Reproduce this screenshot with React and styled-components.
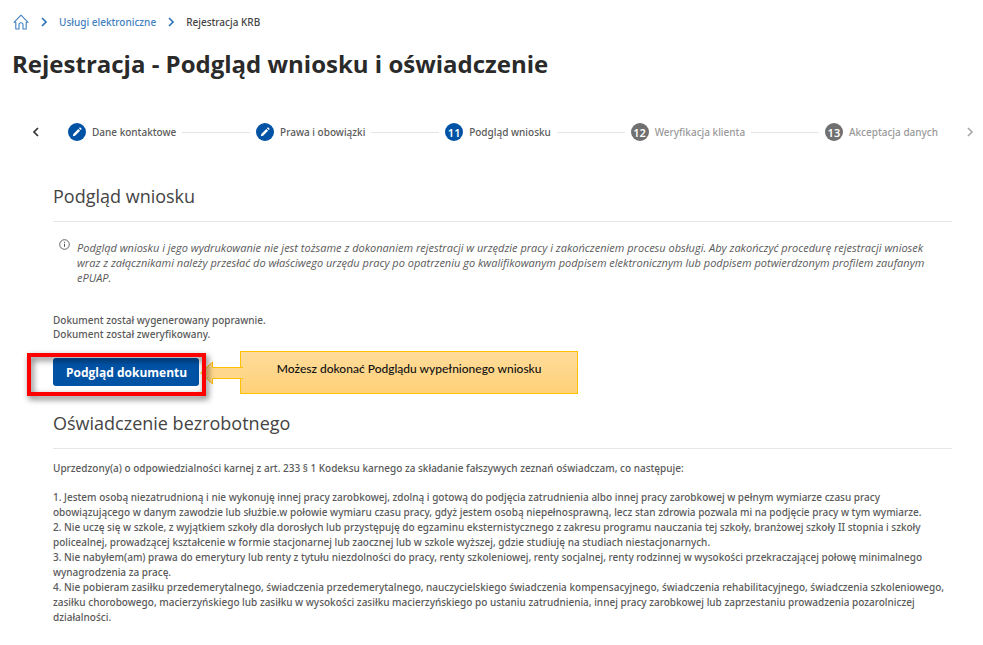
import React from 'react';
import styled, { createGlobalStyle } from 'styled-components';

const GlobalStyle = createGlobalStyle`
    * {
        box-sizing: border-box;
    }

    body {
        margin: 0;
        background-color: #fff;
        font-family: 'Noto Sans', sans-serif;
        font-size: 10px;
        font-weight: 500;
        line-height: 15px;
        color: #5a5a5a;
    }

    h1, h2, p, ol {
        margin: 0;
        padding: 0;
    }
`;

const Page = styled.div`
    padding: 14px 0 20px;
`;

const Breadcrumbs = styled.nav`
    display: flex;
    align-items: center;
    gap: 10px;
    height: 16px;
    padding-left: 13px;
    color: #2f74b8;

    a {
        display: flex;
        color: #3f80c0;
        text-decoration: none;
    }

    span {
        color: #444;
    }

    svg {
        display: block;
    }
`;

const Title = styled.h1`
    margin-top: 18px !important;
    padding-left: 12px !important;
    font-family: 'Open Sans', sans-serif;
    font-size: 24px;
    font-weight: 700;
    line-height: 32px;
    color: #2a2a2a;
`;

const Stepper = styled.div`
    display: flex;
    align-items: center;
    margin-top: 43px;
    padding: 0 8px 0 31px;
`;

const ArrowButton = styled.button`
    display: flex;
    padding: 0;
    border: 0;
    background: none;
    color: ${props => (props.$muted ? '#aaa' : '#333')};
    cursor: pointer;
`;

const Steps = styled.ol`
    display: flex;
    flex: 1;
    align-items: center;
    margin: 0 27px !important;
    list-style: none;
`;

const Step = styled.li`
    display: flex;
    flex: ${props => (props.$last ? 'none' : '1 1 auto')};
    align-items: center;
    white-space: nowrap;
    color: ${props => (props.$muted ? '#999' : '#5a5a5a')};

    &:not(:last-child)::after {
        content: '';
        flex: 1;
        height: 1px;
        margin: 0 6px;
        background-color: #e4e4e4;
    }
`;

const Badge = styled.span`
    display: flex;
    align-items: center;
    justify-content: center;
    width: 18px;
    height: 18px;
    margin-right: 6px;
    border-radius: 50%;
    background-color: ${props => (props.$muted ? '#707070' : '#0052a5')};
    font-size: 11px;
    font-weight: 600;
    color: #fff;
`;

const Content = styled.main`
    padding: 0 31px 0 53px;
`;

const SectionTitle = styled.h2`
    margin-top: ${props => props.$top}px !important;
    padding-bottom: 12px !important;
    border-bottom: 1px solid #e6e6e6;
    font-family: 'Open Sans', sans-serif;
    font-size: 18px;
    font-weight: 400;
    line-height: 26px;
    color: #444;
`;

const Notice = styled.div`
    display: flex;
    gap: 7px;
    margin-top: 17px;
    padding-left: 6px;

    svg {
        flex: none;
    }

    p {
        padding-top: 1px;
        font-family: 'Open Sans', sans-serif;
        font-size: 11px;
        font-style: italic;
        font-weight: 400;
        white-space: nowrap;
    }
`;

const Status = styled.p`
    margin-top: 28px !important;
    line-height: 14px;
`;

const Actions = styled.div`
    display: flex;
    align-items: flex-start;
    margin-top: 10px;
    margin-left: -26px;
`;

const Highlight = styled.div`
    position: relative;
    margin-top: 2px;
    padding: 5px 7px 10px 26px;

    &::after {
        content: '';
        position: absolute;
        z-index: 1;
        inset: 0;
        border: 4px solid #f00;
        filter: drop-shadow(2px 3px 3px rgba(0, 0, 0, 0.6));
        pointer-events: none;
    }
`;

const PreviewButton = styled.button`
    display: block;
    height: 28px;
    padding: 0 12px 0 13px;
    border: 0;
    border-radius: 3px;
    background-color: #0052a5;
    font-family: 'Open Sans', sans-serif;
    font-size: 12px;
    font-weight: 700;
    color: #fff;
    cursor: pointer;
`;

const Callout = styled.div`
    position: relative;
    width: 338px;
    height: 43px;
    margin-left: 34px;
    padding-top: 9px;
    border: 1px solid #ffc000;
    background-image: linear-gradient(#ffdc9b, #ffd178);
    font-family: Lato, sans-serif;
    font-size: 12px;
    line-height: 16px;
    text-align: center;
    color: #111;

    svg {
        position: absolute;
        top: 9px;
        right: 100%;
        margin-right: -2px;
    }
`;

const Statement = styled.div`
    margin-top: 12px;

    p + ol {
        margin-top: 14px;
    }

    ol {
        list-style: none;
    }

    li {
        white-space: nowrap;
    }
`;

const steps = [
    { label: 'Dane kontaktowe', done: true },
    { label: 'Prawa i obowiązki', done: true },
    { label: 'Podgląd wniosku', number: 11 },
    { label: 'Weryfikacja klienta', number: 12, muted: true },
    { label: 'Akceptacja danych', number: 13, muted: true },
];

const Chevron = ({ left }) => (
    <svg width='10' height='10' viewBox='0 0 10 10' fill='none' stroke='currentColor' strokeWidth='1.7' aria-hidden='true'>
        <path d={left ? 'M7 1L3 5l4 4' : 'M3 1l4 4-4 4'}/>
    </svg>
);

const HomeIcon = () => (
    <svg width='16' height='16' viewBox='0 0 16 16' fill='none' stroke='currentColor' strokeWidth='1.1' strokeLinejoin='round' aria-hidden='true'>
        <path d='M1 8.3L8 1.2l7 7.1h-1.8V15H10v-4.2a2 2 0 0 0-4 0V15H2.8V8.3z'/>
    </svg>
);

const PencilIcon = () => (
    <svg width='12' height='12' viewBox='0 0 12 12' fill='#fff' aria-hidden='true'>
        <path d='M1.8 10.2l.5-2.3 5-5 1.8 1.8-5 5zM7.9 2.3l.7-.7q.4-.3.8 0l1 1q.3.4 0 .8l-.7.7z'/>
    </svg>
);

const InfoIcon = () => (
    <svg width='11' height='11' viewBox='0 0 11 11' fill='none' stroke='#555' aria-hidden='true'>
        <circle cx='5.5' cy='5.5' r='4.8' strokeWidth='.9'/>
        <path d='M5.5 4.8v3M5.5 2.8v1.1'/>
    </svg>
);

const App = () => (
    <>
        <GlobalStyle/>
        <Page>
            <Breadcrumbs>
                <a href='#home' aria-label='Strona główna'><HomeIcon/></a>
                <Chevron/>
                <a href='#uslugi'>Usługi elektroniczne</a>
                <Chevron/>
                <span>Rejestracja KRB</span>
            </Breadcrumbs>

            <Title>Rejestracja - Podgląd wniosku i oświadczenie</Title>

            <Stepper>
                <ArrowButton aria-label='Poprzedni'><Chevron left/></ArrowButton>
                <Steps>
                    {steps.map((step, i) => (
                        <Step key={step.label} $muted={step.muted} $last={i === steps.length - 1}>
                            <Badge $muted={step.muted}>{step.done ? <PencilIcon/> : step.number}</Badge>
                            {step.label}
                        </Step>
                    ))}
                </Steps>
                <ArrowButton $muted aria-label='Następny'><Chevron/></ArrowButton>
            </Stepper>

            <Content>
                <SectionTitle $top={42}>Podgląd wniosku</SectionTitle>

                <Notice>
                    <InfoIcon/>
                    <p>
                        Podgląd wniosku i jego wydrukowanie nie jest tożsame z dokonaniem rejestracji w urzędzie pracy i zakończeniem procesu obsługi. Aby zakończyć procedurę rejestracji wniosek<br/>
                        wraz z załącznikami należy przesłać do właściwego urzędu pracy po opatrzeniu go kwalifikowanym podpisem elektronicznym lub podpisem potwierdzonym profilem zaufanym<br/>
                        ePUAP.
                    </p>
                </Notice>

                <Status>
                    Dokument został wygenerowany poprawnie.<br/>
                    Dokument został zweryfikowany.
                </Status>

                <Actions>
                    <Highlight>
                        <PreviewButton>Podgląd dokumentu</PreviewButton>
                    </Highlight>
                    <Callout>
                        <svg width='43' height='24' viewBox='0 0 43 24' fill='#ffd78c' stroke='#ffc000' aria-hidden='true'>
                            <path d='M43 6.5H12.5V1L.7 12l11.8 11v-5.5H43'/>
                        </svg>
                        Możesz dokonać Podglądu wypełnionego wniosku
                    </Callout>
                </Actions>

                <SectionTitle $top={14}>Oświadczenie bezrobotnego</SectionTitle>

                <Statement>
                    <p>Uprzedzony(a) o odpowiedzialności karnej z art. 233 § 1 Kodeksu karnego za składanie fałszywych zeznań oświadczam, co następuje:</p>
                    <ol>
                        <li>
                            1. Jestem osobą niezatrudnioną i nie wykonuję innej pracy zarobkowej, zdolną i gotową do podjęcia zatrudnienia albo innej pracy zarobkowej w pełnym wymiarze czasu pracy<br/>
                            obowiązującego w danym zawodzie lub służbie.w połowie wymiaru czasu pracy, gdyż jestem osobą niepełnosprawną, lecz stan zdrowia pozwala mi na podjęcie pracy w tym wymiarze.
                        </li>
                        <li>
                            2. Nie uczę się w szkole, z wyjątkiem szkoły dla dorosłych lub przystępuję do egzaminu eksternistycznego z zakresu programu nauczania tej szkoły, branżowej szkoły II stopnia i szkoły<br/>
                            policealnej, prowadzącej kształcenie w formie stacjonarnej lub zaocznej lub w szkole wyższej, gdzie studiuję na studiach niestacjonarnych.
                        </li>
                        <li>
                            3. Nie nabyłem(am) prawa do emerytury lub renty z tytułu niezdolności do pracy, renty szkoleniowej, renty socjalnej, renty rodzinnej w wysokości przekraczającej połowę minimalnego<br/>
                            wynagrodzenia za pracę.
                        </li>
                        <li>
                            4. Nie pobieram zasiłku przedemerytalnego, świadczenia przedemerytalnego, nauczycielskiego świadczenia kompensacyjnego, świadczenia rehabilitacyjnego, świadczenia szkoleniowego,<br/>
                            zasiłku chorobowego, macierzyńskiego lub zasiłku w wysokości zasiłku macierzyńskiego po ustaniu zatrudnienia, innej pracy zarobkowej lub zaprzestaniu prowadzenia pozarolniczej<br/>
                            działalności.
                        </li>
                    </ol>
                </Statement>
            </Content>
        </Page>
    </>
);

export default App;
